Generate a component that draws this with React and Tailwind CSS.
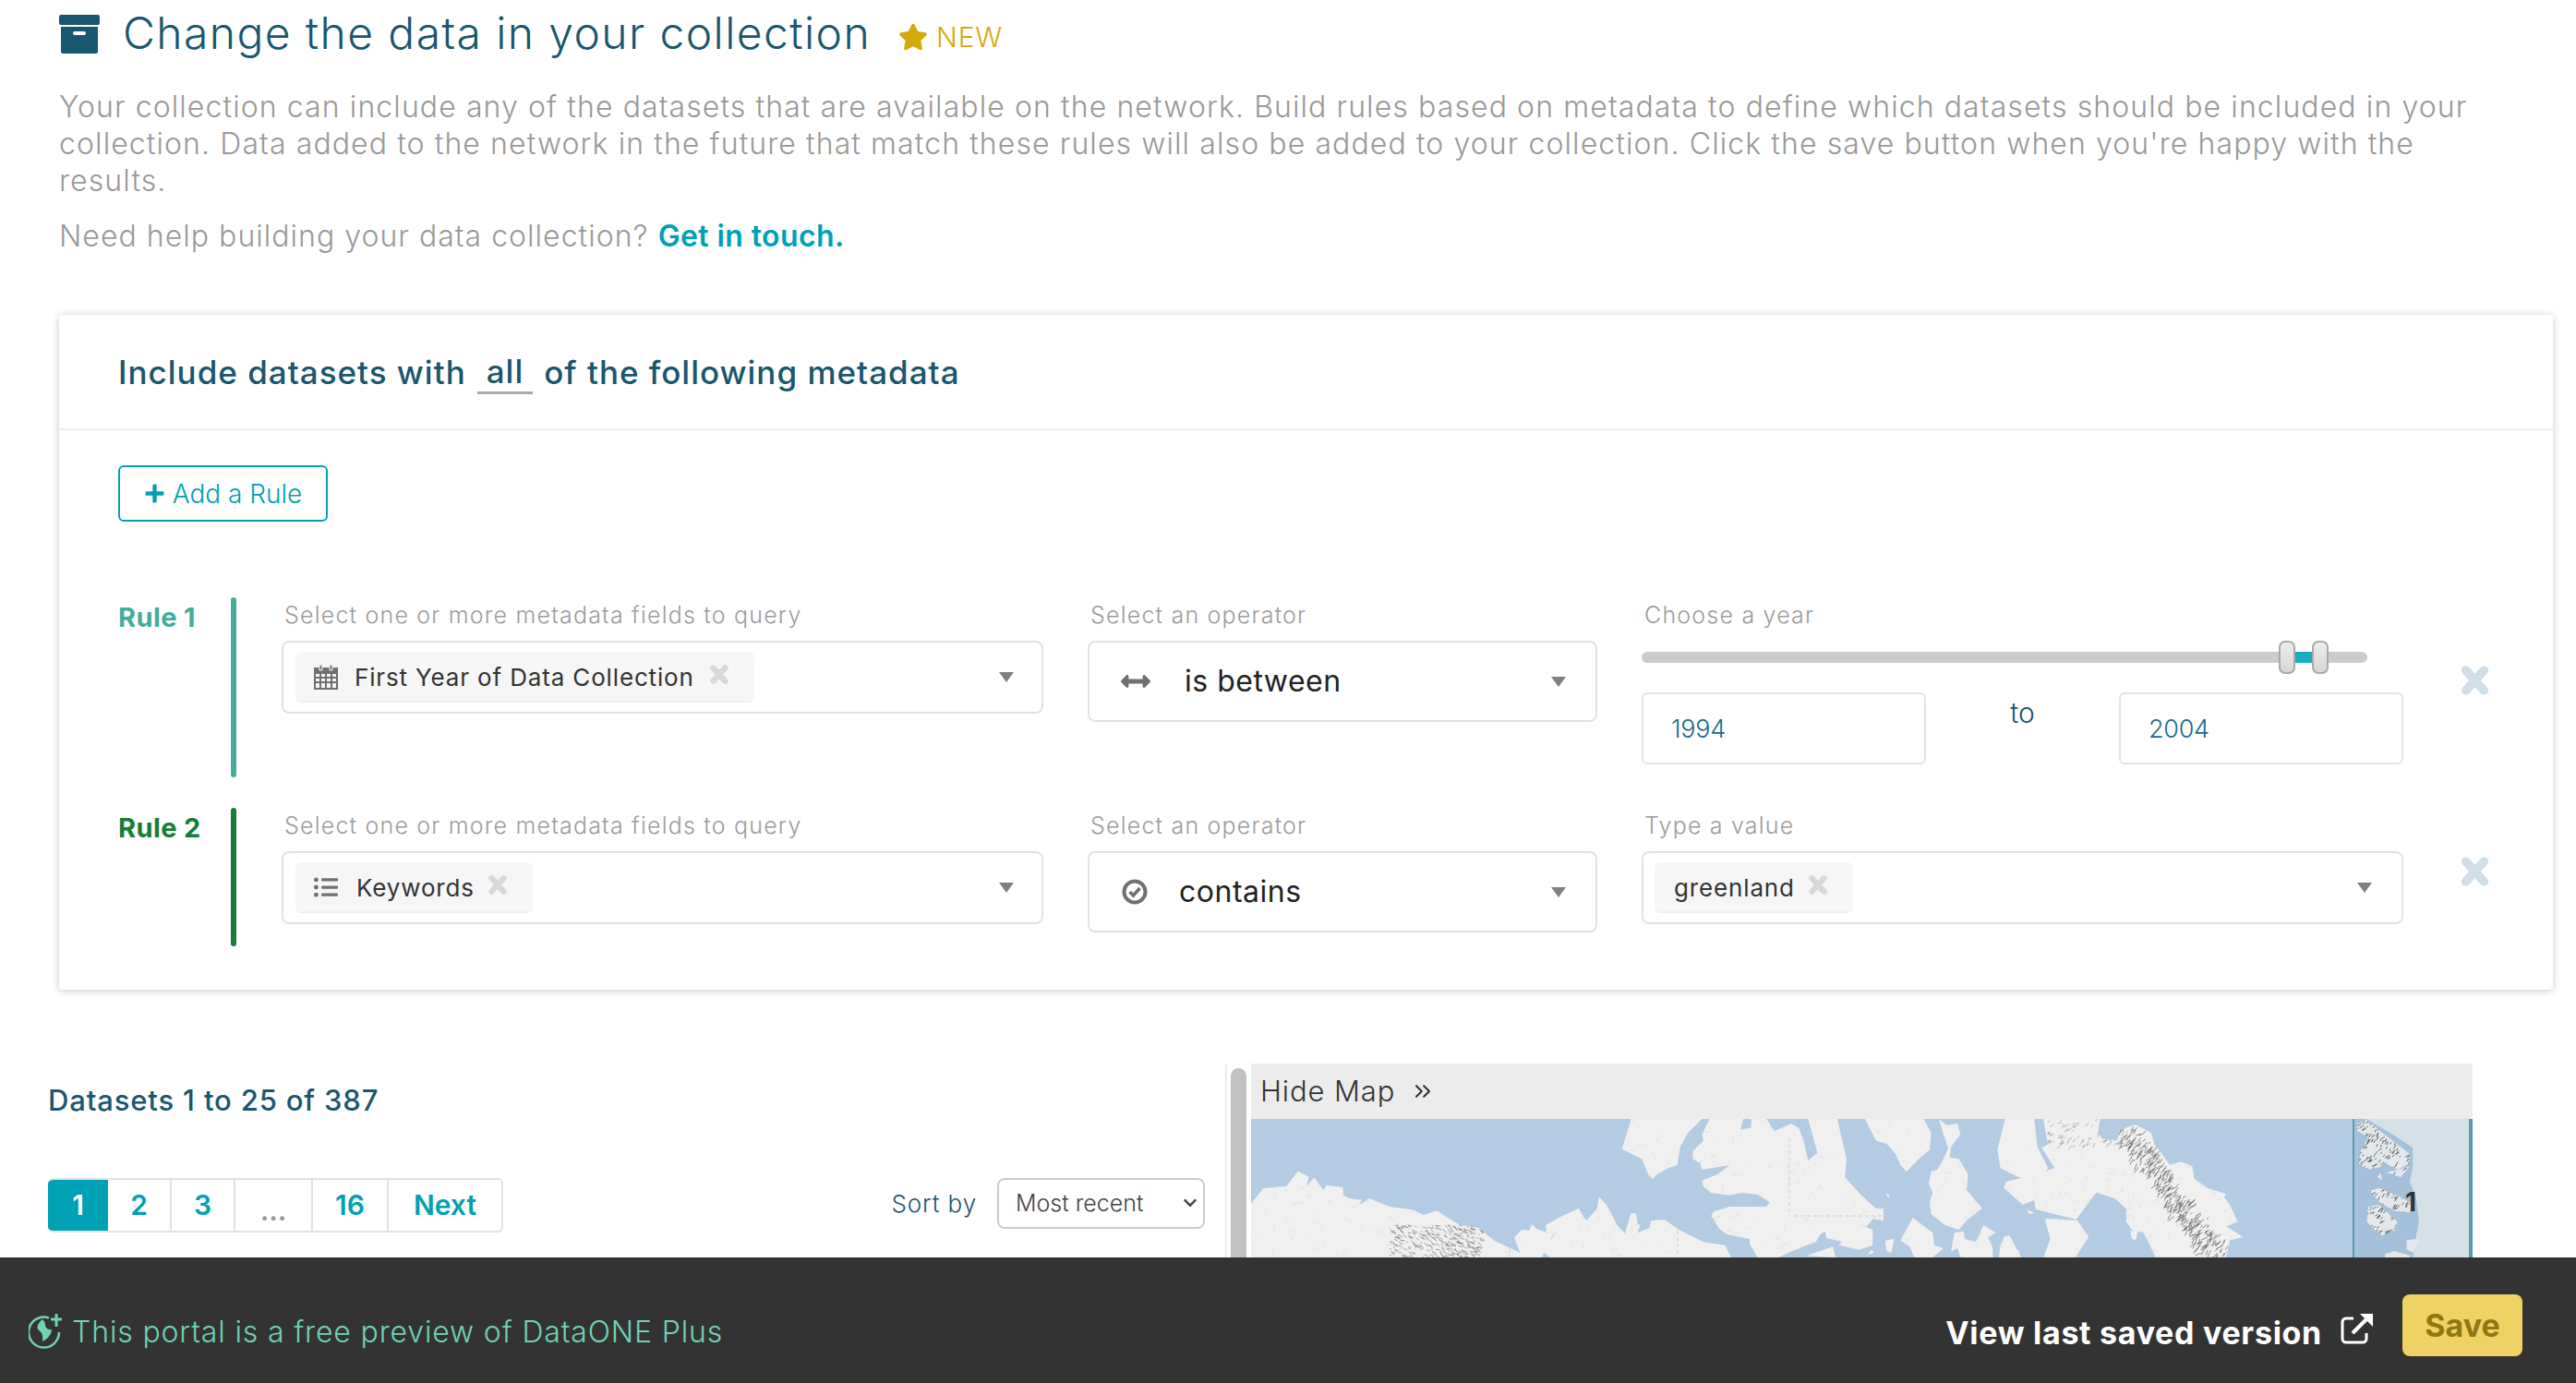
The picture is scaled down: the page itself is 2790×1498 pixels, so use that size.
import React from "react";
import { FaStar, FaPlus, FaListUl, FaArrowsAltH, FaChevronDown } from "react-icons/fa";
import { ChevronsRight } from "lucide-react";

function Caret() {
  return (
    <svg width="16" height="11" viewBox="0 0 16 11" className="shrink-0">
      <path d="M0 0h16L8 11z" fill="#808080" />
    </svg>
  );
}

function XIcon({ className }) {
  return (
    <svg viewBox="0 0 22 22" className={className} preserveAspectRatio="none">
      <path d="M4.5 3.5L17.5 18.5M17.5 3.5L4.5 18.5" stroke="currentColor" strokeWidth="6.5" strokeLinecap="round" fill="none" />
    </svg>
  );
}

function ArchiveIcon() {
  return (
    <svg width="44" height="42" viewBox="0 0 44 42" className="shrink-0">
      <rect x="0" y="0" width="44" height="11" rx="2" fill="#19566f" />
      <path d="M2 13h40v27a2 2 0 0 1-2 2H4a2 2 0 0 1-2-2zM17 18a2 2 0 0 0 0 4h10a2 2 0 0 0 0-4z" fillRule="evenodd" fill="#19566f" />
    </svg>
  );
}

function CalendarIcon() {
  return (
    <svg width="26" height="28" viewBox="0 0 26 28" className="shrink-0">
      <path
        d="M1 5h24v22H1z M1 10h24 M1 15h24 M1 20h24 M7 10v17 M13 10v17 M19 10v17"
        fill="none"
        stroke="#707070"
        strokeWidth="2"
      />
      <path d="M1 4h24v6H1z" fill="#707070" />
      <path d="M6 1h3v6H6z M17 1h3v6h-3z" fill="#707070" stroke="#fff" strokeWidth="1" />
    </svg>
  );
}

function CheckRing() {
  return (
    <svg width="28" height="28" viewBox="0 0 28 28" className="shrink-0">
      <circle cx="14" cy="14" r="11.5" fill="none" stroke="#707070" strokeWidth="4" />
      <path d="M8.5 14l4 4 7-8" fill="none" stroke="#707070" strokeWidth="3.5" />
    </svg>
  );
}

function Chip({ icon, children, width }) {
  return (
    <div className={`flex items-center h-[55px] rounded-[6px] bg-[#f6f6f6] border-b-2 border-[#f0f0f0] ${width}`}>
      {icon}
      {children}
    </div>
  );
}

function ChipText({ children }) {
  return <span className="pt-[2px] text-[26px] text-[#333] tracking-[0.85px]">{children}</span>;
}

function ChipClose({ className }) {
  return <XIcon className={`w-[22px] h-[21px] text-[#d8d8d8] mb-[4px] shrink-0 ${className}`} />;
}

function Label({ children }) {
  return <div className="h-[28px] ml-[3px] mb-[14px] text-[25px] leading-[28px] font-light text-[#9c9c9c] tracking-[1.2px]">{children}</div>;
}

function Box({ className, children }) {
  return (
    <div className={`flex items-center rounded-[8px] border-2 border-[#e2e2e2] bg-white ${className}`}>
      {children}
    </div>
  );
}

function YearInput({ children }) {
  return (
    <div className="flex items-center w-[308px] h-[78px] pl-[30px] pt-[2px] rounded-[6px] border-2 border-[#e4e4e4] text-[27px] text-[#1a6a8a] font-light tracking-[-0.3px]">
      {children}
    </div>
  );
}

function Rule({ label, color, barColor, height, chip, operator, value, removeClass }) {
  return (
    <div className={`flex ${height}`}>
      <div className={`w-[122px] text-[29px] font-bold tracking-[0.4px] ${color}`}>{label}</div>
      <div className={`w-[6px] rounded-full ${barColor}`} />
      <div className="ml-[49px] w-[825px] pt-[5px]">
        <Label>Select one or more metadata fields to query</Label>
        <Box className="h-[79px] pl-[13px] pr-[30px] justify-between">
          {chip}
          <Caret />
        </Box>
      </div>
      <div className="ml-[48px] w-[552px] pt-[5px]">
        <Label>Select an operator</Label>
        {operator}
      </div>
      <div className="ml-[48px] w-[825px] pt-[5px]">{value}</div>
      <XIcon className={`ml-[61px] w-[33px] h-[32px] text-[#d1dee5] shrink-0 ${removeClass}`} />
    </div>
  );
}

// small seeded random so the map stays the same on every render
function makeRandom(seed) {
  let s = seed;
  return () => {
    s = (s * 16807) % 2147483647;
    return s / 2147483647;
  };
}

function hatch(seed, count, pick, len, angle) {
  const r = makeRandom(seed);
  let d = "";
  for (let i = 0; i < count; i++) {
    const [x, y] = pick(r);
    const a = angle === undefined ? r() * 3.1 : angle + (r() - 0.5) * 0.9;
    const l = len * (0.4 + r());
    d += `M${x.toFixed(1)} ${y.toFixed(1)}l${(Math.cos(a) * l).toFixed(1)} ${(Math.sin(a) * l).toFixed(1)}`;
  }
  return d;
}

const westT = "scale(0.3333)";
const midT = "translate(385 0) scale(0.3333)";
const eastT = "translate(795 -72) scale(0.408 0.3333)";
const clusterT = "translate(1025 -12) scale(0.3333)";

const landShapes = [
  { t: westT, d: "M0 275L40 225L115 218L152 170L188 188L180 220L205 190L235 232L245 215L298 222L300 248L320 258L345 262L360 262L352 280L385 258L450 285L525 295L560 312L605 298L640 322L680 345L735 350L790 395L875 435L880 450L0 450Z" },
  { t: westT, d: "M855 385L880 360L905 362L912 342L930 358L960 368L958 345L1005 318L1065 290L1080 318L1090 330L1125 290L1130 253L1155 278L1190 345L1215 372L1235 305L1252 308L1255 340L1265 345L1255 370L1295 355L1300 330L1345 328L1390 360L1470 400L1540 410L1560 450L970 450L945 425L1000 360L975 385L945 450L880 450Z" },
  { t: westT, d: "M1235 0L1465 0L1420 45L1395 90L1385 150L1355 160L1320 180L1305 195L1290 180L1270 130L1205 98Z" },
  { t: midT, d: "M310 50L335 0L445 0L435 35L470 28L470 0L520 0L545 40L600 15L625 30L640 70L655 135L685 110L655 0L750 0L780 130L775 190L830 250L875 290L900 290L900 330L865 325L845 350L815 340L865 360L865 410L820 425L775 415L755 410L765 398L715 388L710 365L695 375L680 400L650 410L590 435L560 450L490 450L465 405L465 390L390 375L365 355L340 315L350 300L400 285L520 285L530 270L490 245L440 240L400 248L340 240L315 220L310 200L360 180L400 150L310 165L305 145L280 130L280 105L315 70Z" },
  { t: midT, d: "M840 0L1030 0L1055 45L1050 100L1015 130L995 150L975 172L955 150L940 115L910 80L875 70Z" },
  { t: midT, d: "M1080 0L1105 20L1140 15L1150 50L1120 90L1115 125L1145 130L1175 180L1170 230L1220 290L1170 330L1145 360L1100 345L1055 310L1050 270L1060 240L1047 210L1055 170L1075 165L1095 130L1110 95L1095 50Z" },
  { t: midT, d: "M1295 0L1390 0L1400 90L1435 160L1400 205L1340 190L1280 160L1270 100L1280 60Z" },
  { t: midT, d: "M905 395L935 390L925 435L910 430Z" },
  { t: midT, d: "M955 395L995 320L1060 370L1065 410L1095 420L1060 450L1000 450L985 415Z" },
  { t: midT, d: "M1130 370L1160 365L1165 390L1200 400L1225 345L1265 370L1240 385L1255 420L1255 450L1150 450L1140 420L1120 430Z" },
  { t: midT, d: "M1280 410L1295 380L1340 430L1345 450L1275 450Z" },
  { t: midT, d: "M1425 330L1460 325L1535 345L1530 410L1550 450L1430 450L1445 400Z" },
  { t: midT, d: "M860 425L870 435L850 440Z" },
  { t: midT, d: "M1365 295L1390 305L1375 310Z" },
  { t: midT, d: "M650 445L735 415L745 450Z" },
  { t: midT, d: "M908 240L920 248L915 258Z" },
  { t: eastT, d: "M155 216L165 290L180 290L150 310L185 375L140 395L55 420L50 440L100 495L130 480L135 510L250 545L280 520L295 455L345 475L375 510L375 545L355 575L420 585L435 620L450 665L640 665L650 610L685 600L640 565L670 550L650 495L635 470L640 460L590 440L555 410L550 370L520 355L490 365L470 330L450 300L440 260L400 235L360 250L350 285L310 280L300 260L305 216Z" },
];

const clusterIslands = [
  "M515 55L550 38L600 80L690 150L690 180L650 200L610 180L590 195L550 200L525 180L530 140L555 95L520 75Z",
  "M560 270L590 260L650 285L695 310L690 340L640 335L590 305Z",
  "M555 320L590 315L650 370L645 395L600 415L575 395L550 370Z",
  "M610 475L640 465L690 480L690 486L610 486Z",
  "M680 430L720 425L700 470L680 460Z",
  "M585 225L595 210L600 235Z",
  "M615 210L690 190L660 225Z",
];

function MapView() {
  const softHatch = hatch(3, 800, (r) => [r() * 1190, r() * 150], 5);
  const westHatch = hatch(7, 320, (r) => [150 + r() * 100, 114 + r() * 36], 4, 0.5);
  const eastHatch = hatch(
    11,
    400,
    (r) => {
      const t = r();
      return [795 + 158 + t * 105 + (r() - 0.75) * 32, 6 + t * 144 + (r() - 0.5) * 12];
    },
    6,
    2.3
  );
  const topHatch = hatch(13, 90, (r) => [860 + r() * 90, r() * 30], 4, 2.3);
  const clusterHatch = hatch(
    23,
    260,
    (r) => {
      const t = r();
      if (t < 0.6) return [1195 + r() * 62, r() * 58];
      if (t < 0.8) return [1212 + r() * 46, 74 + r() * 30];
      return [1208 + r() * 36, 92 + r() * 36];
    },
    4,
    2.3
  );

  return (
    <div className="relative h-[150px] bg-[#b4cbe4] overflow-hidden">
      <svg width="1323" height="150" viewBox="0 0 1323 150" className="block">
        <defs>
          <clipPath id="land">
            {landShapes.map((s) => (
              <path key={s.d} d={s.d} transform={s.t} />
            ))}
          </clipPath>
          <clipPath id="cluster-land">
            {clusterIslands.map((d) => (
              <path key={d} d={d} transform={clusterT} />
            ))}
          </clipPath>
        </defs>
        <g fill="#f0f0f0">
          {landShapes.map((s) => (
            <path key={s.d} d={s.d} transform={s.t} />
          ))}
        </g>
        <g clipPath="url(#land)" fill="none">
          <path d={softHatch} stroke="#e2e2e2" strokeWidth="1" />
          <path d={westHatch} stroke="#6e6e6e" strokeWidth="1" opacity="0.6" />
          <path d={eastHatch} stroke="#5f5f5f" strokeWidth="1" opacity="0.7" />
          <path d={topHatch} stroke="#777" strokeWidth="1" opacity="0.5" />
        </g>
        <g transform={eastT} fill="#b4cbe4">
          <path d="M295 455L345 475L375 510L372 545L395 585L400 610L380 580L355 575L330 630L360 630L385 580L420 585L435 620L452 665L240 665L270 590L240 545Z" />
        </g>
        <g transform={eastT} fill="#f0f0f0">
          <path d="M160 540L245 545L275 600L240 665L155 665L175 600Z" />
          <path d="M50 600L65 595L95 665L40 665Z" />
          <path d="M385 580L405 582L400 610L390 605Z" />
        </g>
        <path d="M280 90v60 M462 100v50 M588 105h110 M508 105l-30 15 M583 20v85" stroke="#cfcfcf" strokeWidth="1" strokeDasharray="4 3" fill="none" />

        {/* highlighted cluster area */}
        <rect x="1193" width="130" height="150" fill="#a5c0d9" />
        <g transform={clusterT}>
          <path d="M550 36L640 90L700 130L700 190L690 240L710 290L720 370L710 420L700 486L900 486L900 36Z" fill="#d5e1e7" />
          {clusterIslands.map((d) => (
            <path key={d} d={d} fill="#e2e8eb" />
          ))}
        </g>
        <path d={clusterHatch} clipPath="url(#cluster-land)" stroke="#555" strokeWidth="1" fill="none" opacity="0.85" />
        <rect x="1193" width="2" height="150" fill="#5a9bad" />
        <rect x="1319" width="4" height="150" fill="#5a9bad" />
      </svg>
      <span className="absolute left-[1250px] top-[75px] text-[28px] leading-[30px] font-bold text-[#333]">1</span>
    </div>
  );
}

function Pager() {
  const cell = "flex items-center justify-center h-full border-r-2 border-[#e2e2e2] text-[#00a0b5] text-[30px] font-semibold";
  return (
    <div className="flex h-[59px] w-[493px] rounded-[6px] border-y-2 border-r-2 border-[#e2e2e2] overflow-hidden">
      <div className="flex items-center justify-center w-[65px] h-full bg-[#00a0b5] text-white text-[30px] font-semibold">1</div>
      <div className={`${cell} w-[69px]`}>2</div>
      <div className={`${cell} w-[69px]`}>3</div>
      <div className={`${cell} w-[84px] !text-[#999] font-bold pt-[12px]`}>...</div>
      <div className={`${cell} w-[82px]`}>16</div>
      <div className="flex items-center justify-center flex-1 text-[#00a0b5] text-[30px] font-semibold">Next</div>
    </div>
  );
}

export default function App() {
  return (
    <div className="flex flex-col h-[1498px] overflow-hidden bg-white font-[Inter,sans-serif]">
      <main className="flex-1 min-h-0 overflow-hidden">
        <div className="pl-[64px] pt-[10px]">
          <div className="flex items-center h-[54px]">
            <ArchiveIcon />
            <h1 className="ml-[25px] mb-[2px] text-[48px] font-light text-[#19566f] tracking-[1.4px]">Change the data in your collection</h1>
            <FaStar className="ml-[30px] mt-[6px] text-[#d4a90a] text-[32px]" />
            <span className="ml-[9px] mt-[6px] text-[30px] font-light text-[#d4a90a] tracking-[0.8px]">NEW</span>
          </div>
          <p className="mt-[32px] text-[32px] leading-[40px] font-light text-[#999] tracking-[1.1px]">
            Your collection can include any of the datasets that are available on the network. Build rules based on metadata to define which datasets should be included in your
            <br />
            collection. Data added to the network in the future that match these rules will also be added to your collection. Click the save button when you're happy with the
            <br />
            results.
          </p>
          <p className="mt-[20px] text-[32px] leading-[40px] font-light text-[#999] tracking-[1.03px]">
            Need help building your data collection? <a className="font-semibold text-[#00a0b5] tracking-[0.4px]">Get in touch.</a>
          </p>
        </div>

        <section className="ml-[64px] mt-[65px] w-[2701px] h-[731px] rounded-[4px] bg-white shadow-[0_1px_10px_rgba(0,0,0,0.22)]">
          <div className="flex items-center h-[125px] px-[64px] pt-[2px] border-b-2 border-[#eee] text-[35px] font-medium text-[#19566f] tracking-[1px]">
            Include datasets with
            <span className="mx-[12px] px-[10px] border-b-[3px] border-[#aaa] leading-[44px]">all</span>
            of the following metadata
          </div>
          <div className="px-[64px] pt-[38px]">
            <button className="flex items-center justify-center w-[227px] h-[61px] rounded-[6px] border-2 border-[#00a0b5] text-[28px] font-light text-[#00a0b5]">
              <FaPlus className="text-[23px] mr-[8px]" />
              Add a Rule
            </button>

            <div className="mt-[82px] flex flex-col gap-[33px]">
              <Rule
                label="Rule 1"
                color="text-[#45ad9b]"
                barColor="bg-[#45ad9b]"
                height="h-[195px]"
                removeClass="mt-[74px]"
                chip={
                  <Chip width="w-[497px]" icon={<span className="ml-[20px] mr-[18px]"><CalendarIcon /></span>}>
                    <ChipText>First Year of Data Collection</ChipText>
                    <ChipClose className="ml-[16px]" />
                  </Chip>
                }
                operator={
                  <Box className="h-[88px] pl-[34px] pr-[32px]">
                    <FaArrowsAltH className="text-[#707070] text-[32px] shrink-0" />
                    <span className="ml-[37px] text-[32px] text-[#222] flex-1 tracking-[0.5px]">is between</span>
                    <Caret />
                  </Box>
                }
                value={
                  <>
                    <div className="h-[28px] ml-[3px] text-[25px] leading-[28px] font-light text-[#9c9c9c] tracking-[1.2px]">Choose a year</div>
                    <div className="relative w-[786px] h-[12px] mt-[26px] rounded-full bg-[#ccc]">
                      <div className="absolute left-[690px] top-0 w-[36px] h-[12px] bg-[#14adc2]" />
                      <div className="absolute left-[690px] top-[-12px] w-[18px] h-[36px] rounded-[7px] border-2 border-[#aaa] bg-gradient-to-b from-[#eee] to-[#d6d6d6]" />
                      <div className="absolute left-[726px] top-[-12px] w-[18px] h-[36px] rounded-[7px] border-2 border-[#aaa] bg-gradient-to-b from-[#eee] to-[#d6d6d6]" />
                    </div>
                    <div className="flex justify-between mt-[32px]">
                      <YearInput>1994</YearInput>
                      <div className="text-[30px] font-light text-[#19566f]">to</div>
                      <YearInput>2004</YearInput>
                    </div>
                  </>
                }
              />
              <Rule
                label="Rule 2"
                color="text-[#167d38]"
                barColor="bg-[#167d38]"
                height="h-[150px]"
                removeClass="mt-[53px]"
                chip={
                  <Chip width="w-[257px]" icon={<FaListUl className="ml-[20px] mr-[20px] text-[#707070] text-[26px] shrink-0" />}>
                    <ChipText>Keywords</ChipText>
                    <ChipClose className="ml-[14px]" />
                  </Chip>
                }
                operator={
                  <Box className="h-[88px] pl-[35px] pr-[32px]">
                    <CheckRing />
                    <span className="ml-[34px] text-[32px] text-[#222] flex-1 tracking-[0.5px]">contains</span>
                    <Caret />
                  </Box>
                }
                value={
                  <>
                    <Label>Type a value</Label>
                    <Box className="h-[79px] pl-[12px] pr-[32px] justify-between">
                      <Chip width="w-[215px]" icon={<span className="ml-[21px]" />}>
                        <ChipText>greenland</ChipText>
                        <ChipClose className="ml-[14px]" />
                      </Chip>
                      <Caret />
                    </Box>
                  </>
                }
              />
            </div>
          </div>
        </section>

        <section className="flex mt-[80px]">
          <div className="w-[1327px] pl-[52px] pr-[22px] shrink-0">
            <div className="mt-[22px] text-[31px] leading-[36px] font-medium text-[#19566f] tracking-[0.85px]">Datasets 1 to 25 of 387</div>
            <div className="flex items-start justify-between mt-[66px]">
              <Pager />
              <div className="flex items-center">
                <span className="mr-[22px] text-[26px] font-light text-[#19566f] tracking-[0.9px]">Sort by</span>
                <div className="relative">
                  <select className="block appearance-none w-[225px] h-[55px] pl-[18px] rounded-[8px] border-2 border-[#ccc] bg-white text-[25px] font-light text-[#444] font-[Inter,sans-serif]">
                    <option>Most recent</option>
                  </select>
                  <FaChevronDown className="absolute right-[8px] top-[19px] text-[#444] text-[16px]" />
                </div>
              </div>
            </div>
          </div>
          <div className="w-[28px] h-[210px] shrink-0 border-l-2 border-[#eee] pl-[4px] pt-[5px]">
            <div className="w-[17px] h-[300px] rounded-full bg-[#c1c1c1]" />
          </div>
          <div className="w-[1323px] shrink-0">
            <div className="flex items-center h-[60px] pl-[10px] bg-[#ececec] text-[31px] font-light text-[#333] tracking-[0.9px]">
              Hide Map
              <ChevronsRight className="ml-[16px] w-[28px] h-[28px]" strokeWidth={1.8} />
            </div>
            <MapView />
          </div>
        </section>
      </main>

      <footer className="flex items-center h-[136px] shrink-0 bg-[#333] pl-[31px] pr-[58px] pt-[26px]">
        <svg width="38" height="38" viewBox="0 0 38 38" className="shrink-0 mb-[2px]">
          <path d="M22 4.5A16.5 16.5 0 1 0 33 20" fill="none" stroke="#6fd3b4" strokeWidth="2.5" />
          <path d="M15 6c-5 4-7 9-4 12 3 2 5 5 4 12 6-3 10-8 10-13-4 1-7-2-7-5 0-2-1-4-3-6z" fill="#6fd3b4" />
          <path d="M30 0v14M24 6h12" stroke="#6fd3b4" strokeWidth="3" />
        </svg>
        <span className="ml-[9px] flex-1 text-[32px] font-light text-[#6fd3b4] tracking-[0.85px]">This portal is a free preview of DataONE Plus</span>
        <span className="text-[34px] font-bold text-white tracking-[0.7px]">View last saved version</span>
        <svg width="36" height="34" viewBox="0 0 36 34" className="ml-[20px] mb-[8px] shrink-0">
          <path d="M14 6H6a4 4 0 0 0-4 4v18a4 4 0 0 0 4 4h18a4 4 0 0 0 4-4v-6" fill="none" stroke="#fff" strokeWidth="3" />
          <path d="M13 22L29 6" stroke="#fff" strokeWidth="4" />
          <path d="M21 1h14v14z" fill="#fff" />
        </svg>
        <button className="ml-[31px] mb-[15px] w-[130px] h-[67px] rounded-[8px] bg-[#eed264] text-[34px] font-bold text-[#8f7812]">Save</button>
      </footer>
    </div>
  );
}
